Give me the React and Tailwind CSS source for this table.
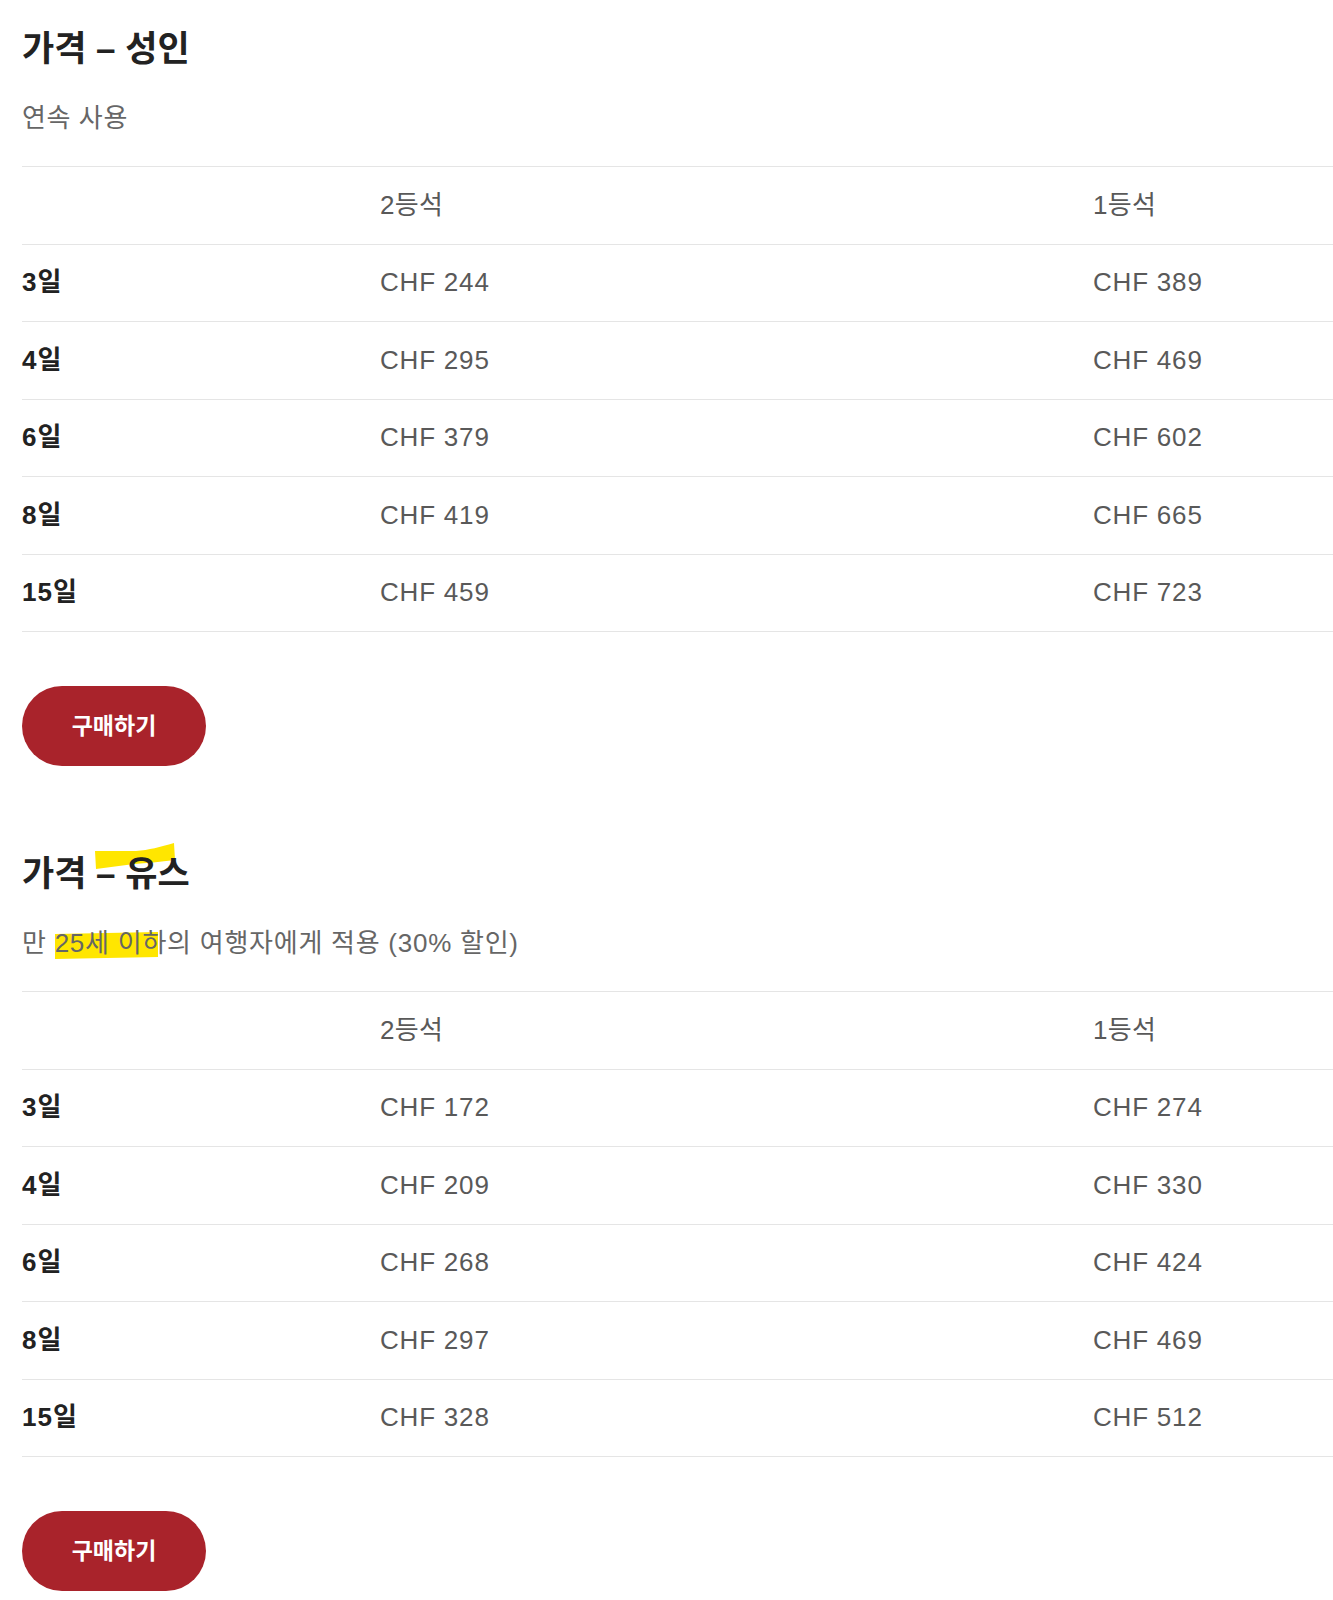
import React from 'react';

const adult = [
    ['3일', 'CHF 244', 'CHF 389'],
    ['4일', 'CHF 295', 'CHF 469'],
    ['6일', 'CHF 379', 'CHF 602'],
    ['8일', 'CHF 419', 'CHF 665'],
    ['15일', 'CHF 459', 'CHF 723'],
];

const youth = [
    ['3일', 'CHF 172', 'CHF 274'],
    ['4일', 'CHF 209', 'CHF 330'],
    ['6일', 'CHF 268', 'CHF 424'],
    ['8일', 'CHF 297', 'CHF 469'],
    ['15일', 'CHF 328', 'CHF 512'],
];

function PriceTable({ rows }) {
    return (
        <div className="mt-8 border-t border-[#e5e5e5]">
            <div className="grid grid-cols-[358px_713px_1fr] items-center h-[77.5px] border-b border-[#e5e5e5] text-[26px] tracking-[0.3px] text-[#595959]">
                <div></div>
                <div>2등석</div>
                <div>1등석</div>
            </div>
            {rows.map(([label, second, first]) => (
                <div key={label} className="grid grid-cols-[358px_713px_1fr] items-center h-[77.5px] border-b border-[#e5e5e5] text-[26px]">
                    <div className="font-bold text-[#222] tracking-[1px]">{label}</div>
                    <div className="text-[#595959] tracking-[0.8px]">{second}</div>
                    <div className="text-[#595959] tracking-[0.8px]">{first}</div>
                </div>
            ))}
        </div>
    );
}

function BuyButton() {
    return (
        <button className="mt-[54px] w-[184px] h-[80px] rounded-full bg-[#a9232b] text-white text-[23px] font-bold">
            구매하기
        </button>
    );
}

function App() {
    return (
        <div className="pl-[22px] pt-[29px] pb-4 bg-white font-['Liberation_Sans','Noto_Sans_CJK_KR',sans-serif]">
            <h2 className="text-[35px] leading-[40px] font-bold text-[#222]">가격 – 성인</h2>
            <p className="mt-[33px] text-[26px] leading-[32px] tracking-[0.6px] text-[#666]">연속 사용</p>
            <PriceTable rows={adult} />
            <BuyButton />

            <div className="relative mt-[88px]">
                <svg className="absolute left-[72px] top-[-12px]" width="84" height="28" viewBox="0 0 84 28">
                    <path d="M1 9 L42 9 C55 8 66 5 80 1 L81 18 C66 20 52 21 40 22 L2 27 Z" fill="#ffe600" />
                </svg>
                <h2 className="relative text-[35px] leading-[40px] font-bold text-[#222]">가격 – 유스</h2>
            </div>
            <p className="mt-[33px] text-[26px] leading-[32px] tracking-[0.75px] text-[#666]">
                만{' '}
                <span className="relative">
                    <span className="absolute left-[0px] right-[9px] top-[5px] bottom-[0px] bg-[#ffe600] -skew-y-1"></span>
                    <span className="relative">25세 이하</span>
                </span>
                의 여행자에게 적용 (30% 할인)
            </p>
            <PriceTable rows={youth} />
            <BuyButton />
        </div>
    );
}

export default App;
